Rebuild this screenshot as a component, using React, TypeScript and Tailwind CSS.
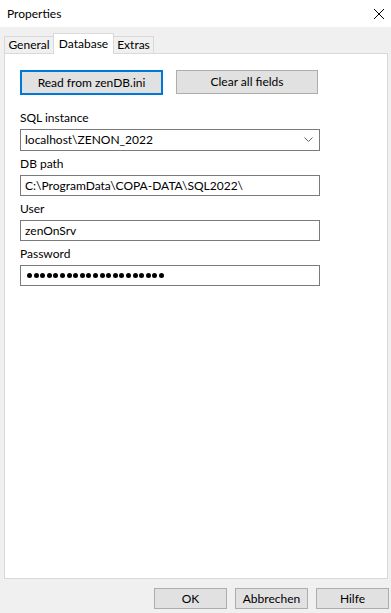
import React from "react";

const font = { fontFamily: 'Lato, "Liberation Sans", sans-serif' };

const Field = ({ label, value, top, h = "h-[21px]" }: { label: string; value: React.ReactNode; top: string; h?: string }) => (
  <div className={top}>
    <div className="text-[12px] leading-[16px] text-black mb-[3px]">{label}</div>
    <div className={`w-[300px] ${h} border border-[#7a7a7a] bg-white flex items-center px-[4px] text-[12px] text-black`}>
      {value}
    </div>
  </div>
);

export default function App() {
  return (
    <div className="w-[391px] h-[613px] bg-[#f0f0f0] flex flex-col overflow-hidden" style={font}>
      {/* title bar */}
      <div className="h-[27px] bg-white flex items-center justify-between pl-[7px] pr-[5px]">
        <span className="text-[12px] text-black">Properties</span>
        <svg width="12" height="12" viewBox="0 0 12 12" className="mr-[1px]">
          <path d="M1 1 L11 11 M11 1 L1 11" stroke="#000" strokeWidth="1" />
        </svg>
      </div>

      {/* tabs */}
      <div className="flex items-end pl-[4px] h-[26px] relative z-10">
        <div className="w-[50px] h-[17px] border border-b-0 border-[#d9d9d9] flex items-center justify-center text-[12px] text-black">
          General
        </div>
        <div className="w-[61px] h-[21px] -mb-[1px] bg-white border border-b-0 border-[#d9d9d9] -ml-[1px] flex items-start pt-[1px] justify-center text-[12px] text-black">
          Database
        </div>
        <div className="w-[40px] h-[17px] border border-b-0 border-l-0 border-[#d9d9d9] flex items-center justify-center text-[12px] text-black">
          Extras
        </div>
      </div>

      {/* panel */}
      <div className="ml-[4px] w-[384px] h-[526px] bg-white border border-[#d9d9d9] pl-[15px] pt-[16px]">
        <div className="flex gap-[13px]">
          <div className="w-[143px] h-[25px] border-2 border-[#0078d7] bg-[#e1e1e1] flex items-center justify-center text-[12px] text-black">
            Read from zenDB.ini
          </div>
          <div className="w-[142px] h-[24px] border border-[#adadad] bg-[#e1e1e1] flex items-center justify-center text-[12px] text-black">
            Clear all fields
          </div>
        </div>

        <Field
          top="mt-[15px]"
          h="h-[22px]"
          label="SQL instance"
          value={
            <div className="flex w-full items-center justify-between">
              <span>localhost\ZENON_2022</span>
              <svg width="9" height="6" viewBox="0 0 9 6" className="mr-[2px]">
                <path d="M0.5 0.5 L4.5 4.5 L8.5 0.5" stroke="#606060" strokeWidth="1" fill="none" />
              </svg>
            </div>
          }
        />
        <Field top="mt-[5px]" label="DB path" value="C:\ProgramData\COPA-DATA\SQL2022\" />
        <Field top="mt-[5px]" label="User" value="zenOnSrv" />
        <Field
          top="mt-[5px]"
          label="Password"
          value={
            <div className="flex gap-[1.6px] pl-[2px]">
              {Array.from({ length: 21 }).map((_, i) => (
                <span key={i} className="w-[5px] h-[5px] rounded-full bg-black" />
              ))}
            </div>
          }
        />
      </div>

      {/* bottom buttons */}
      <div className="flex justify-end gap-[8px] pr-[2px] mt-[9px]">
        {["OK", "Abbrechen", "Hilfe"].map((t) => (
          <div
            key={t}
            className="w-[73px] h-[21px] border border-[#adadad] bg-[#e1e1e1] flex items-center justify-center text-[12px] text-black"
          >
            {t}
          </div>
        ))}
      </div>
    </div>
  );
}
